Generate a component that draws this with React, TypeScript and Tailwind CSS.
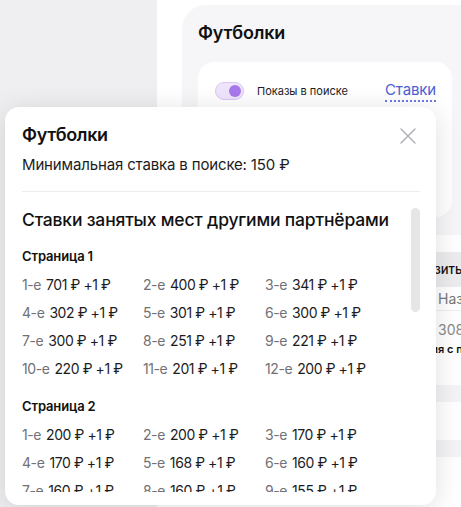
import React from 'react';

const page1 = [
  ['1-е', '701'], ['2-е', '400'], ['3-е', '341'],
  ['4-е', '302'], ['5-е', '301'], ['6-е', '300'],
  ['7-е', '300'], ['8-е', '251'], ['9-е', '221'],
  ['10-е', '220'], ['11-е', '201'], ['12-е', '200'],
];

const page2 = [
  ['1-е', '200'], ['2-е', '200'], ['3-е', '170'],
  ['4-е', '170'], ['5-е', '168'], ['6-е', '160'],
  ['7-е', '160'], ['8-е', '160'], ['9-е', '155'],
];

function BidGrid({ items }: { items: string[][] }) {
  return (
    <div className="grid grid-cols-[121px_122px_1fr]">
      {items.map(([place, bid]) => (
        <div key={place} className="flex h-[28px] items-center gap-[5px] whitespace-nowrap text-[14px] tracking-[-0.03em]">
          <span className="text-[#717176]">{place}</span>
          <span className="text-[#1c1c1e]">{bid} ₽ +1 ₽</span>
        </div>
      ))}
    </div>
  );
}

export default function App() {
  return (
    <div
      className="relative flex h-[507px] w-[461px] overflow-hidden bg-white"
      style={{ fontFamily: 'Inter, "Noto Sans", sans-serif' }}
    >
      {/* page behind the modal */}
      <div className="h-full w-[157px] shrink-0 bg-[#efeff2]" />
      <div className="ml-[25px] flex min-w-0 flex-1 flex-col pt-[5px]">
        <div className="mr-[-40px] h-[230px] rounded-[24px] bg-[#f6f6f8] pl-[16px] pr-[49px] pt-[16px]">
          <h2 className="text-[18px] font-semibold leading-[24px] tracking-[-0.01em] text-[#111]">Футболки</h2>
          <div className="mt-[17px] h-[155px] rounded-[16px] bg-white pl-[17px] pr-[16px] pt-[18px]">
            <div className="flex items-center">
              <div className="flex h-[18px] w-[29px] items-center justify-end rounded-full border border-[#d9c6f7] bg-[#eee4fc] pr-[2px]">
                <div className="h-[12px] w-[12px] rounded-full bg-[#a877ec]" />
              </div>
              <span className="ml-[13px] text-[11px] text-[#222]">Показы в поиске</span>
              <span className="ml-auto border-b-2 border-dotted border-[#6b7be3] text-[15px] leading-[20px] tracking-[-0.01em] text-[#4c5fd5]">
                Ставки
              </span>
            </div>
          </div>
        </div>
        <div className="mt-[17px] mr-[-40px] flex h-[35px] items-center bg-[#ececee] pl-[205px] text-[13px] font-medium text-[#111] whitespace-nowrap">
          Отобразить
        </div>
        <div className="mr-[-40px] flex h-[24px] items-center border-b border-[#eee] pl-[256px] text-[14px] text-[#777] whitespace-nowrap">
          Название
        </div>
        <div className="mr-[-40px] mt-[10px] pl-[256px] text-[14px] leading-[18px] text-[#888]">308</div>
        <div className="mr-[-40px] pl-[215px] text-[11px] font-semibold leading-[20px] text-[#111] whitespace-nowrap">
          Позиция с поиском
        </div>
        <div className="mr-[-40px] mt-[26px] h-[17px] bg-[#f4f4f6]" />
        <div className="mr-[-40px] mt-[38px] h-[17px] bg-[#f4f4f6]" />
      </div>

      {/* modal */}
      <div className="absolute left-[5px] top-[107px] flex h-[398px] w-[431px] flex-col rounded-[14px] bg-white pb-[13px] pl-[17px] pr-[16px] pt-[16px] shadow-[0_4px_28px_rgba(0,0,0,0.13)]">
        <div className="flex items-start justify-between">
          <h3 className="text-[18px] font-semibold leading-[24px] tracking-[-0.02em] text-[#111]">Футболки</h3>
          <button className="mr-[4px] mt-[5px] text-[#b4b4b9]">
            <svg width="16" height="16" viewBox="0 0 16 16" fill="none" stroke="currentColor" strokeWidth="1.6" strokeLinecap="round">
              <path d="M1 1L15 15M15 1L1 15" />
            </svg>
          </button>
        </div>
        <p className="mt-[8px] text-[15px] leading-[20px] tracking-[-0.01em] text-[#1c1c1e]">Минимальная ставка в поиске: 150 ₽</p>
        <div className="mt-[16px] h-px bg-[#ececee]" />

        <div className="mt-[16px] flex min-h-0 flex-1 gap-[2px]">
          <div className="min-w-0 flex-1 overflow-hidden">
            <h4 className="text-[17.5px] font-medium leading-[24px] tracking-[-0.01em] text-[#111]">Ставки занятых мест другими партнёрами</h4>
            <p className="mt-[15px] text-[13px] font-semibold leading-[18px] tracking-[-0.01em] text-[#111]">Страница 1</p>
            <div className="mt-[5px]">
              <BidGrid items={page1} />
            </div>
            <p className="mt-[15px] text-[13px] font-semibold leading-[18px] tracking-[-0.01em] text-[#111]">Страница 2</p>
            <div className="mt-[5px]">
              <BidGrid items={page2} />
            </div>
          </div>
          <div className="w-[9px] shrink-0">
            <div className="h-[104px] rounded-full bg-[#e6e6e8]" />
          </div>
        </div>
      </div>
    </div>
  );
}
